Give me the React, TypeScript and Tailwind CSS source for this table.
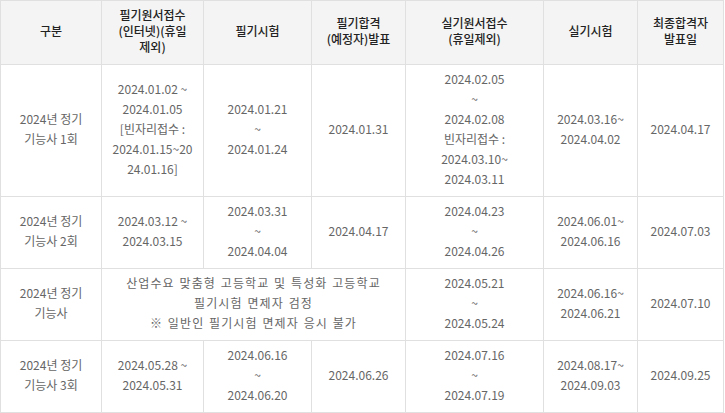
const headers = [
  ["구분"],
  ["필기원서접수", "(인터넷)(휴일", "제외)"],
  ["필기시험"],
  ["필기합격", "(예정자)발표"],
  ["실기원서접수", "(휴일제외)"],
  ["실기시험"],
  ["최종합격자", "발표일"],
];

const widths = ["w-[101px]", "w-[102px]", "w-[108px]", "w-[94px]", "w-[138px]", "w-[94px]", "w-[86px]"];

type Cell = { lines: string[]; span?: number };

const rows: { h: string; cells: Cell[] }[] = [
  {
    h: "h-[132px]",
    cells: [
      { lines: ["2024년 정기", "기능사 1회"] },
      { lines: ["2024.01.02 ~", "2024.01.05", "[빈자리접수 :", "2024.01.15~20", "24.01.16]"] },
      { lines: ["2024.01.21", "~", "2024.01.24"] },
      { lines: ["2024.01.31"] },
      { lines: ["2024.02.05", "~", "2024.02.08", "빈자리접수 :", "2024.03.10~", "2024.03.11"] },
      { lines: ["2024.03.16~", "2024.04.02"] },
      { lines: ["2024.04.17"] },
    ],
  },
  {
    h: "h-[72px]",
    cells: [
      { lines: ["2024년 정기", "기능사 2회"] },
      { lines: ["2024.03.12 ~", "2024.03.15"] },
      { lines: ["2024.03.31", "~", "2024.04.04"] },
      { lines: ["2024.04.17"] },
      { lines: ["2024.04.23", "~", "2024.04.26"] },
      { lines: ["2024.06.01~", "2024.06.16"] },
      { lines: ["2024.07.03"] },
    ],
  },
  {
    h: "h-[72px]",
    cells: [
      { lines: ["2024년 정기", "기능사"] },
      {
        lines: ["산업수요 맞춤형 고등학교 및 특성화 고등학교", "필기시험 면제자 검정", "※ 일반인 필기시험 면제자 응시 불가"],
        span: 3,
      },
      { lines: ["2024.05.21", "~", "2024.05.24"] },
      { lines: ["2024.06.16~", "2024.06.21"] },
      { lines: ["2024.07.10"] },
    ],
  },
  {
    h: "h-[72px]",
    cells: [
      { lines: ["2024년 정기", "기능사 3회"] },
      { lines: ["2024.05.28 ~", "2024.05.31"] },
      { lines: ["2024.06.16", "~", "2024.06.20"] },
      { lines: ["2024.06.26"] },
      { lines: ["2024.07.16", "~", "2024.07.19"] },
      { lines: ["2024.08.17~", "2024.09.03"] },
      { lines: ["2024.09.25"] },
    ],
  },
];

export default function App() {
  return (
    <div className="w-[725px] h-[413px] bg-white overflow-hidden font-['Noto_Sans_CJK_KR',sans-serif]">
      <table className="w-[724px] table-fixed border-collapse text-[12px]">
        <colgroup>
          {widths.map((w, i) => (
            <col key={i} className={w} />
          ))}
        </colgroup>
        <thead>
          <tr className="h-[64px] bg-[#f4f4f4]">
            {headers.map((lines, i) => (
              <th
                key={i}
                className="border border-[#e0e0e0] px-1 pb-[3px] text-center align-middle font-medium leading-[16px] text-[#222]"
              >
                {lines.map((l, j) => (
                  <div key={j}>{l}</div>
                ))}
              </th>
            ))}
          </tr>
        </thead>
        <tbody>
          {rows.map((row, r) => (
            <tr key={r} className={row.h}>
              {row.cells.map((c, i) => (
                <td
                  key={i}
                  colSpan={c.span}
                  className={
                    "border border-[#e0e0e0] px-1 pb-[3px] text-center align-middle leading-[20px] text-[#666] " +
                    (c.span ? "tracking-[1.1px] [word-spacing:1px]" : "")
                  }
                >
                  {c.lines.map((l, j) => (
                    <div key={j} className="whitespace-nowrap">
                      {l}
                    </div>
                  ))}
                </td>
              ))}
            </tr>
          ))}
        </tbody>
      </table>
    </div>
  );
}
